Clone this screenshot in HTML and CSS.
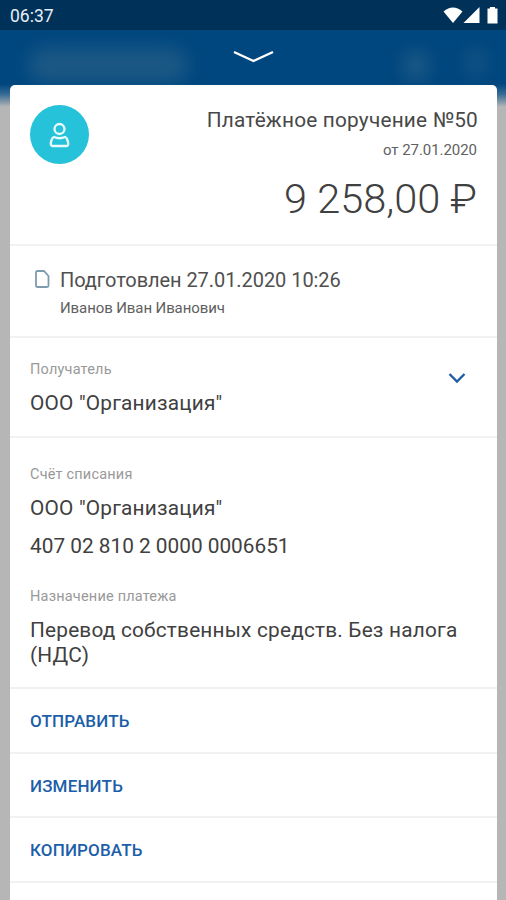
FILE: index.html
```html
<!DOCTYPE html>
<html lang="ru">
<head>
<meta charset="utf-8">
<title>Платёжное поручение</title>
<link rel="stylesheet" href="styles.css">
</head>
<body>
<div class="screen">
  <div class="backdrop"><i class="haze haze-title"></i><i class="haze haze-search"></i><i class="haze haze-menu"></i></div>
  <header class="status-bar">
    <span class="clock">06:37</span>
    <svg class="status-icons" width="56" height="18" viewBox="0 0 56 18" fill="#fff"><path d="M.5 4.500Q10 -3.500 19.500 4.500L10 16Z"/><path d="M36.500 0V16H20.500Z"/><path d="M47 0H52V1.500H54.500V16.500H44.500V1.500H47Z"/></svg>
  </header>
  <div class="handle"><svg width="42" height="14" viewBox="0 0 42 14" fill="none" stroke="#fff" stroke-width="2.3"><path d="M1 2L20.500 11L40 2"/></svg></div>
  <main class="card">
    <section class="summary">
      <div class="avatar"><svg width="22" height="28" viewBox="0 0 22 28" fill="none" stroke="#e9fbff" stroke-width="2.300"><circle cx="10.500" cy="8" r="5"/><path d="M5 16Q10.500 18.500 16 16C18 16.500 19.200 20.500 19.200 23Q19.200 25 17.200 25H3.800Q1.800 25 1.800 23C1.800 20.500 3 16.500 5 16Z"/></svg></div>
      <div class="order">
        <h1 class="title">Платёжное поручение №50</h1>
        <div class="date">от 27.01.2020</div>
        <div class="amount">9 258,00 ₽</div>
      </div>
    </section>
    <section class="state">
      <svg class="doc" width="15" height="18" viewBox="0 0 15 18" fill="none" stroke="#7e9aae" stroke-width="1.800"><path d="M2.500 1H9L13.500 6V15.500Q13.500 17 12 17H2.500Q1 17 1 15.500V2.500Q1 1 2.500 1Z"/></svg>
      <div>
        <div class="state-name">Подготовлен 27.01.2020 10:26</div>
        <div class="person">Иванов Иван Иванович</div>
      </div>
    </section>
    <section class="payee">
      <div>
        <div class="label">Получатель</div>
        <div class="value org">ООО "Организация"</div>
      </div>
      <svg class="expand" width="18" height="12" viewBox="0 0 18 12" fill="none" stroke="#1d5ca5" stroke-width="2.300"><path d="M1.500 2L9 9.500L16.500 2"/></svg>
    </section>
    <section class="details">
      <div class="label">Счёт списания</div>
      <div class="value org">ООО "Организация"</div>
      <div class="value account">407 02 810 2 0000 0006651</div>
      <div class="label reason">Назначение платежа</div>
      <div class="value purpose">Перевод собственных средств. Без налога (НДС)</div>
    </section>
    <div class="action">ОТПРАВИТЬ</div>
    <div class="action">ИЗМЕНИТЬ</div>
    <div class="action">КОПИРОВАТЬ</div>
  </main>
</div>
</body>
</html>
```
FILE: styles.css
```css
* { box-sizing: border-box; }
body { margin: 0; font-family: Roboto, sans-serif; color: #404040; overflow: hidden; }
.screen { position: relative; width: 506px; height: 900px; overflow: hidden; display: flex; flex-direction: column; background: #b6b6b6; }
.backdrop { position: absolute; inset: 0 0 auto; height: 108px; background: linear-gradient(#00477f 0 84px, #356a94 94px, #b6b6b6 107px); }
.haze { position: absolute; background: #2a6189; filter: blur(9px); opacity: .75; }
.haze-title { left: 28px; top: 47px; width: 160px; height: 36px; border-radius: 20px; opacity: .65; }
.haze-search { left: 405px; top: 53px; width: 22px; height: 26px; }
.haze-menu { left: 467px; top: 50px; width: 18px; height: 25px; opacity: .5; }
.status-bar { position: relative; height: 30px; background: #003158; color: #e8edf5; display: flex; justify-content: space-between; padding: 0 7px 0 10px; }
.clock { font-size: 17.500px; line-height: 33px; }
.status-icons { margin-top: 7px; }
.handle { position: relative; height: 55px; padding: 20px 0 0 233px; }
.handle svg { display: block; }
.card { position: relative; flex: 1; margin: 0 9px 0 10px; background: #fff; border-radius: 5px 5px 0 0; }
section { border-bottom: 2px solid #f1f1f1; }
.summary { height: 161px; padding: 20px 19px 0 20px; display: flex; justify-content: space-between; }
.avatar { width: 59px; height: 59px; border-radius: 50%; background: #25c2d9; display: grid; place-items: center; }
.order { text-align: right; }
.title { margin: 3px 0 0; font-size: 20.800px; line-height: 24px; font-weight: 400; letter-spacing: .2px; color: #484848; }
.date { margin: 8px 1px 0 0; font-size: 15px; line-height: 20px; color: #606060; letter-spacing: -.05px; }
.amount { margin: 14px 1px 0 0; font-size: 41.500px; line-height: 50px; font-weight: 300; }
.state { height: 92px; padding: 22px 0 0 25px; display: flex; }
.doc { margin: 2px 10px 0 0; }
.state-name { font-size: 20px; line-height: 24px; color: #505050; letter-spacing: -.06px; }
.person { margin-top: 6px; font-size: 15px; line-height: 20px; color: #606060; letter-spacing: -.1px; }
.payee { height: 100px; padding: 22px 31px 0 20px; display: flex; justify-content: space-between; }
.expand { margin-top: 12px; }
.label { font-size: 14.500px; line-height: 20px; color: #999; letter-spacing: .2px; }
.value { font-size: 20.800px; line-height: 25px; letter-spacing: .2px; }
.org { margin-top: 11px; }
.details { height: 251px; padding: 27px 20px 0; }
.account { margin-top: 13px; letter-spacing: 0; }
.reason { margin-top: 28px; }
.purpose { margin-top: 11px; }
.action { height: 64.700px; border-bottom: 2px solid #f1f1f1; padding-left: 20px; font-size: 17px; line-height: 65px; font-weight: 500; letter-spacing: .15px; color: #1c5ea9; }
```
